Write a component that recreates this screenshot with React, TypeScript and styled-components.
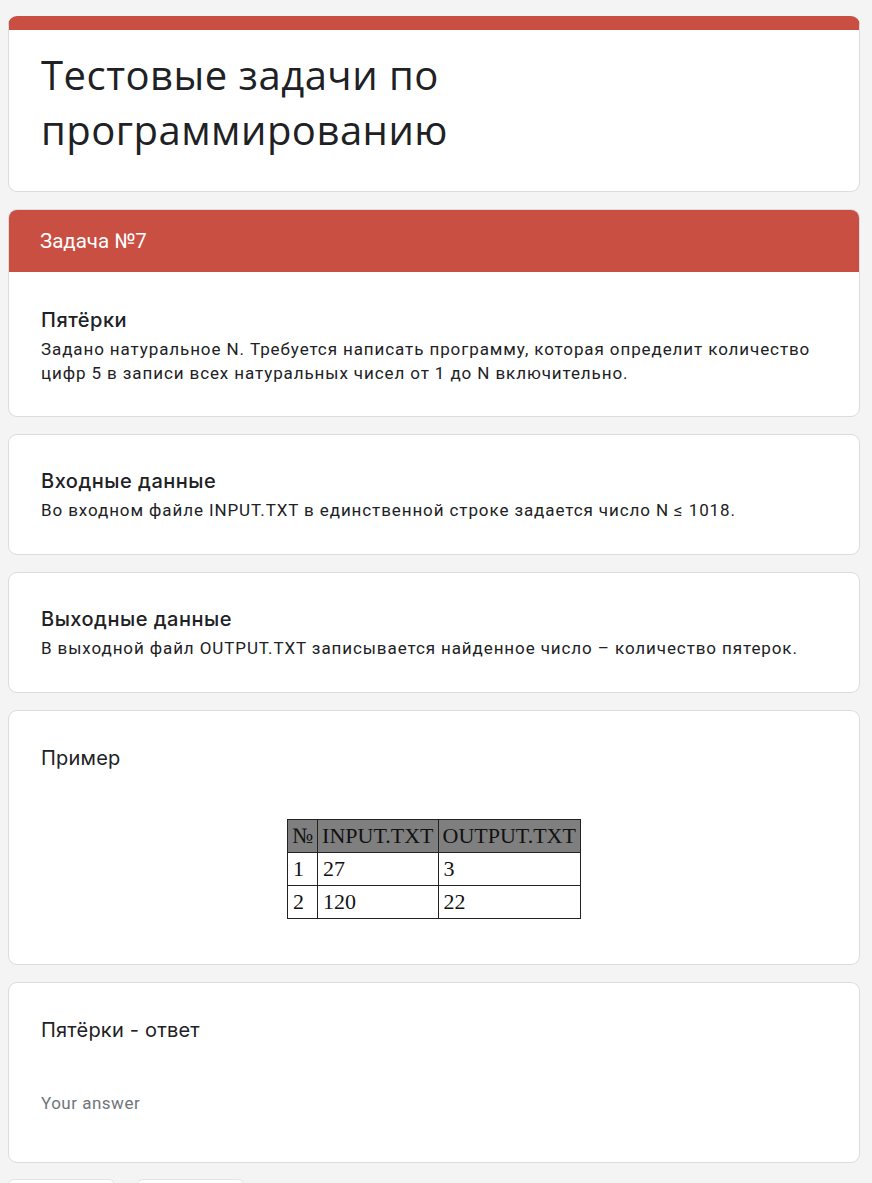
import styled, { createGlobalStyle } from "styled-components";

const GlobalStyle = createGlobalStyle`
  html, body {
    margin: 0;
    padding: 0;
    background: #f4f4f4;
  }
  body {
    font-family: Roboto, "Noto Sans", sans-serif;
    color: #202124;
  }
`;

const Page = styled.div`
  display: flex;
  flex-direction: column;
  gap: 17px;
  width: 852px;
  margin-left: 8px;
  padding-top: 16px;
`;

const Card = styled.div<{ $accent?: boolean }>`
  background: #fff;
  border: 1px solid #dadce0;
  border-radius: 9px;
  overflow: hidden;
  ${({ $accent }) => ($accent ? "border-top: 14px solid #c94f42;" : "")}
  box-sizing: border-box;
`;

const CardBody = styled.div<{ $pt?: number; $pb?: number }>`
  padding: ${({ $pt = 32 }) => $pt}px 32px ${({ $pb = 32 }) => $pb}px;
`;

const FormTitle = styled.h1`
  margin: 0;
  font-family: "Open Sans", Inter, sans-serif;
  font-weight: 400;
  font-size: 40px;
  line-height: 55px;
  letter-spacing: 0.5px;
  color: #202124;
  width: 470px;
`;

const SectionHeader = styled.div`
  background: #c94f42;
  color: #fff;
  height: 63px;
  display: flex;
  align-items: center;
  padding: 0 32px;
  font-family: Roboto, sans-serif;
  font-size: 20.5px;
  margin: -1px -1px 0;
`;

const QTitle = styled.div`
  font-family: Inter, "Open Sans", sans-serif;
  font-size: 20px;
  font-weight: 500;
  line-height: 28px;
  letter-spacing: 0.5px;
  margin-bottom: 3px;
  color: #202124;
`;

const QText = styled.div`
  font-family: Roboto, sans-serif;
  font-size: 17px;
  line-height: 24px;
  letter-spacing: 0.9px;
  color: #202124;
`;

const PlainTitle = styled(QTitle)`
  font-weight: 400;
  letter-spacing: 0.2px;
`;

const TableWrap = styled.div`
  display: flex;
  justify-content: center;
  padding-top: 44px;
`;

const Sample = styled.table`
  border-collapse: collapse;
  font-family: "Liberation Serif", "Times New Roman", serif;
  font-size: 22px;
  color: #111;
  td, th {
    border: 1.5px solid #222;
    padding: 0 5px;
    height: 32px;
    text-align: left;
    font-weight: 400;
  }
  th {
    background: #7f7f7f;
    padding: 0 4px;
  }
`;

const AnswerHint = styled.div`
  margin-top: 49px;
  font-family: Roboto, sans-serif;
  font-size: 17px;
  color: #70757a;
  letter-spacing: 0.5px;
`;

const ButtonRow = styled.div`
  display: flex;
  gap: 22px;
  margin-top: -1px;
`;

const GhostButton = styled.div<{ $w: number }>`
  width: ${({ $w }) => $w}px;
  height: 30px;
  background: #fff;
  border: 1px solid #e3e3e3;
  border-radius: 6px;
`;

const rows = [
  ["1", "27", "3"],
  ["2", "120", "22"],
];

export default function App() {
  return (
    <>
      <GlobalStyle />
      <Page>
        <Card $accent>
          <CardBody $pt={17} $pb={34}>
            <FormTitle>Тестовые задачи по программированию</FormTitle>
          </CardBody>
        </Card>

        <Card>
          <SectionHeader>Задача №7</SectionHeader>
          <CardBody $pt={34} $pb={31}>
            <QTitle>Пятёрки</QTitle>
            <QText>
              Задано натуральное N. Требуется написать программу, которая
              определит количество цифр 5 в записи всех натуральных чисел от 1 до N
              включительно.
            </QText>
          </CardBody>
        </Card>

        <Card>
          <CardBody $pt={32} $pb={32}>
            <QTitle>Входные данные</QTitle>
            <QText>Во входном файле INPUT.TXT в единственной строке задается число N ≤ 1018.</QText>
          </CardBody>
        </Card>

        <Card>
          <CardBody $pt={32} $pb={32}>
            <QTitle>Выходные данные</QTitle>
            <QText>В выходной файл OUTPUT.TXT записывается найденное число – количество пятерок.</QText>
          </CardBody>
        </Card>

        <Card>
          <CardBody $pt={33} $pb={45}>
            <PlainTitle>Пример</PlainTitle>
            <TableWrap>
              <Sample>
                <thead>
                  <tr>
                    <th>№</th>
                    <th>INPUT.TXT</th>
                    <th>OUTPUT.TXT</th>
                  </tr>
                </thead>
                <tbody>
                  {rows.map((r) => (
                    <tr key={r[0]}>
                      {r.map((c, i) => (
                        <td key={i}>{c}</td>
                      ))}
                    </tr>
                  ))}
                </tbody>
              </Sample>
            </TableWrap>
          </CardBody>
        </Card>

        <Card>
          <CardBody $pt={33} $pb={49}>
            <PlainTitle>Пятёрки - ответ</PlainTitle>
            <AnswerHint>Your answer</AnswerHint>
          </CardBody>
        </Card>

        <ButtonRow>
          <GhostButton $w={105} />
          <GhostButton $w={105} />
        </ButtonRow>
      </Page>
    </>
  );
}
